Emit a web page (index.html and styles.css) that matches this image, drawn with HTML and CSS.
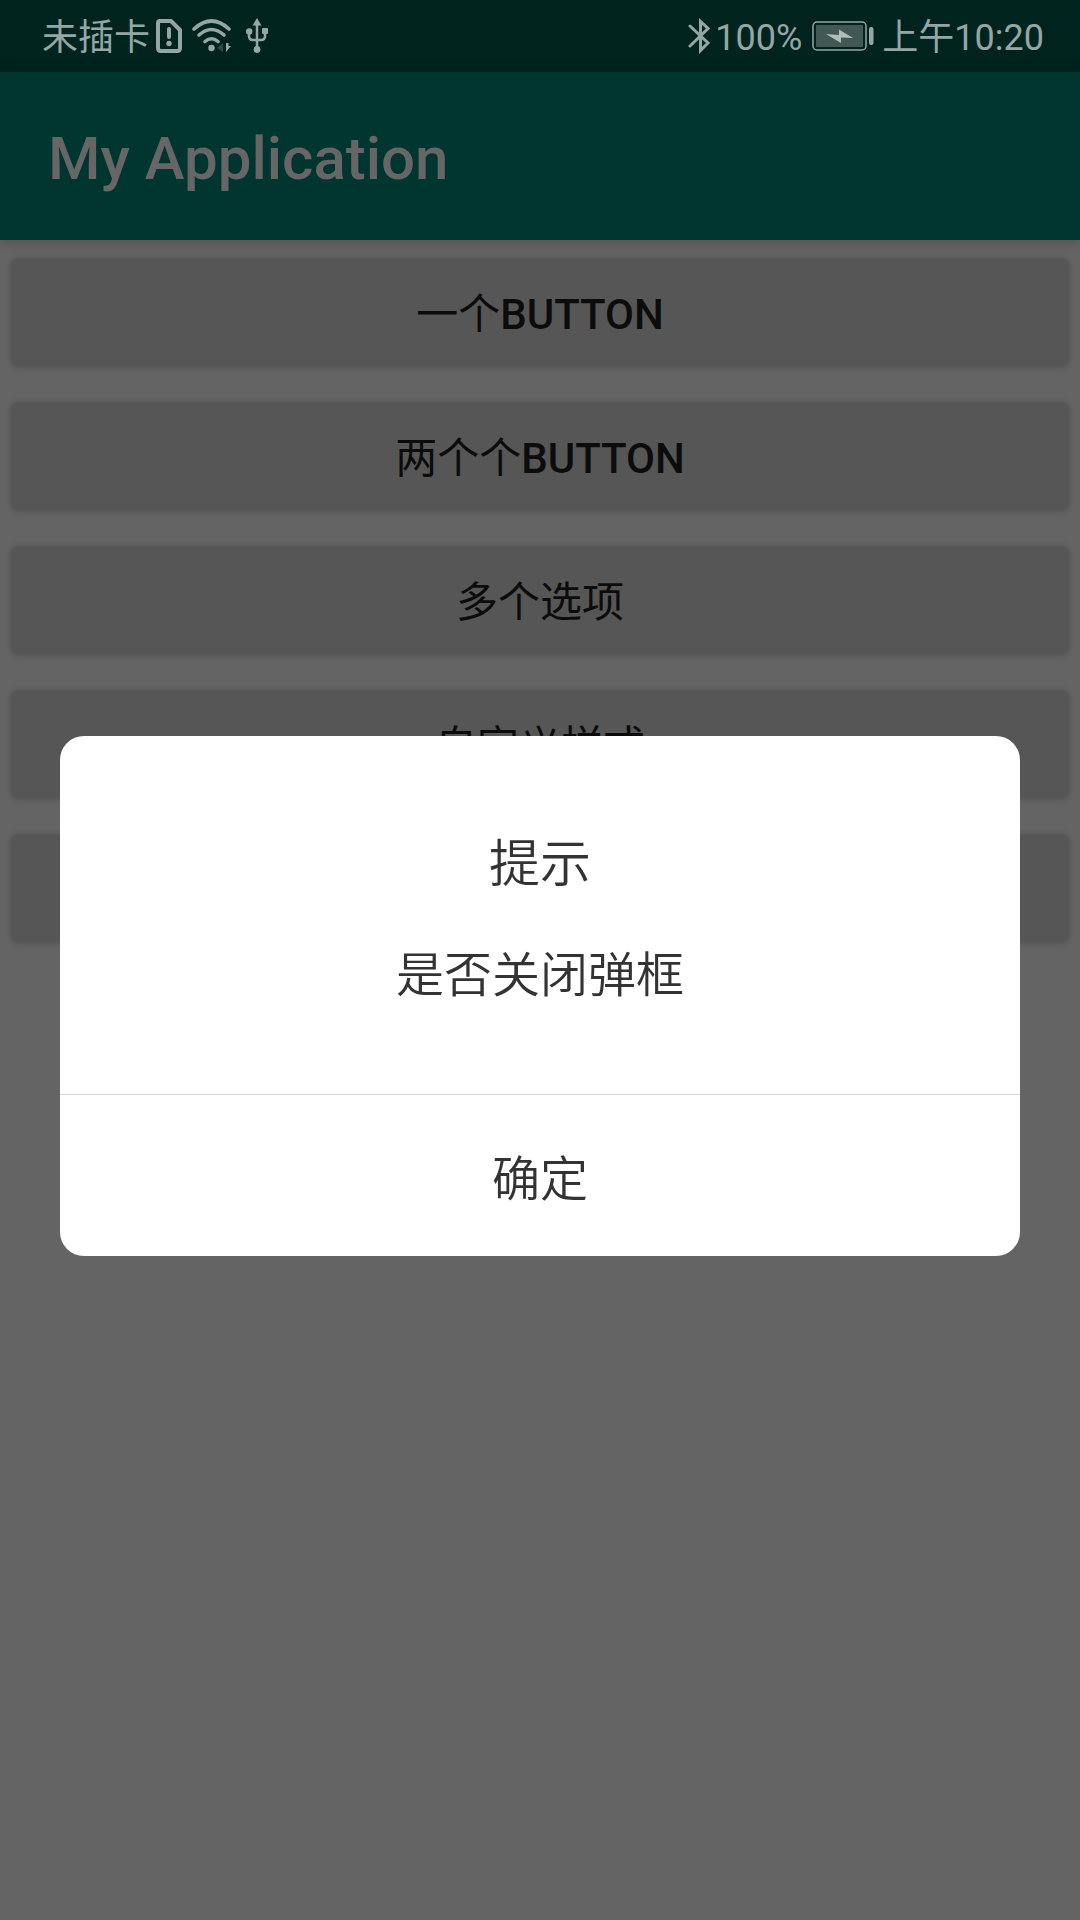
FILE: index.html
```html
<!DOCTYPE html>
<html lang="zh-CN">
<head>
<meta charset="utf-8">
<meta name="viewport" content="width=device-width, initial-scale=1">
<title>My Application</title>
<link rel="stylesheet" href="styles.css">
</head>
<body>
<div class="status-bar">
  <div class="status-group">
    <span class="status-text">未插卡</span>
    <svg class="icon-sim" width="26" height="34" viewBox="0 0 26 34" aria-hidden="true">
      <path d="M4 2H15L24 11V29Q24 32 21 32H5Q2 32 2 29V4Q2 2 4 2Z" fill="none" stroke="currentColor" stroke-width="4" stroke-linejoin="round"/>
      <path d="M13 10V18" stroke="currentColor" stroke-width="4" stroke-linecap="round"/>
      <circle cx="13" cy="24.500" r="2.700" fill="currentColor"/>
    </svg>
    <svg class="icon-wifi" width="40" height="34" viewBox="0 0 40 34" aria-hidden="true">
      <g fill="none" stroke="currentColor" stroke-width="3.600" stroke-linecap="round">
        <path d="M2 10Q19.500 -6 37 10"/>
        <path d="M7 16Q19.500 5 32 16"/>
        <path d="M13 22.500Q19.500 17 26 22.500"/>
      </g>
      <circle cx="19.500" cy="29" r="3.200" fill="currentColor"/>
      <path d="M31 24V33L25 29Z" fill="currentColor" opacity=".3"/>
      <path d="M34 24V33L39 27H36.500V24Z" fill="currentColor"/>
    </svg>
    <svg class="icon-usb" width="22" height="36" viewBox="0 0 22 36" aria-hidden="true">
      <path d="M11 6V32M3 13V18Q3 22 7 22H15Q19 22 19 18V13" fill="none" stroke="currentColor" stroke-width="2.500"/>
      <path d="M11 0L15.500 7.500H6.500Z" fill="currentColor"/>
      <circle cx="3.200" cy="13.500" r="3.200" fill="currentColor"/>
      <rect x="16" y="10" width="6" height="6" rx="1" fill="currentColor"/>
      <circle cx="11" cy="31.500" r="3.400" fill="currentColor"/>
    </svg>
  </div>
  <div class="status-group">
    <svg class="icon-bluetooth" width="22" height="36" viewBox="0 0 22 36" aria-hidden="true">
      <path d="M2 8L20 25L12.500 32.500V3.500L20 10.500L2 28" fill="none" stroke="currentColor" stroke-width="3" stroke-linecap="round"/>
    </svg>
    <span class="status-text">100%</span>
    <svg class="icon-battery" width="62" height="30" viewBox="0 0 62 30" aria-hidden="true">
      <rect x="1" y="1" width="53" height="28" rx="4" fill="none" stroke="currentColor" stroke-width="1.500"/>
      <rect x="4" y="4" width="47" height="22" rx="1" fill="#415855"/>
      <path d="M14 13L27 14V8.500L41 17L29 16.500V22Z" fill="#b0bdba"/>
      <rect x="57" y="6" width="4.500" height="18" rx="2" fill="currentColor"/>
    </svg>
    <span class="status-text">上午10:20</span>
  </div>
</div>
<header class="app-bar"><h1 class="app-title">My Application</h1></header>
<main class="button-list">
  <button class="list-button" type="button">一个<span class="latin">BUTTON</span></button>
  <button class="list-button" type="button">两个个<span class="latin">BUTTON</span></button>
  <button class="list-button" type="button">多个选项</button>
  <button class="list-button" type="button">自定义样式</button>
  <button class="list-button" type="button"></button>
</main>
<div class="dialog-layer">
  <section class="dialog" role="dialog" aria-modal="true" aria-labelledby="dialog-title">
    <div class="dialog-content">
      <h2 class="dialog-title" id="dialog-title">提示</h2>
      <p class="dialog-message">是否关闭弹框</p>
    </div>
    <button class="dialog-confirm" type="button">确定</button>
  </section>
</div>
</body>
</html>
```
FILE: styles.css
```css
* {
  box-sizing: border-box;
}

body {
  margin: 0;
  min-height: 100vh;
  background: #646464;
  font-family: Roboto, "Noto Sans CJK SC", sans-serif;
}

button {
  border: 0;
  font-family: inherit;
}

.status-bar {
  display: flex;
  align-items: center;
  justify-content: space-between;
  height: 72px;
  padding: 0 36px 0 42px;
  background: #00231e;
  color: #94a7a4;
  font-size: 36px;
  line-height: 48px;
}

.status-group {
  display: flex;
  align-items: center;
}

.status-text {
  padding-top: 4px;
}

.icon-sim {
  margin-left: 6px;
}

.icon-wifi {
  margin-left: 10px;
}

.icon-usb {
  margin-left: 14px;
}

.icon-bluetooth {
  margin-right: 5px;
}

.icon-battery {
  margin: 0 8px 0 10px;
}

.app-bar {
  position: relative;
  display: flex;
  align-items: center;
  height: 168px;
  padding: 6px 48px 0;
  background: #003530;
  box-shadow: 0 2px 12px rgba(0, 0, 0, 0.2);
}

.app-title {
  margin: 0;
  color: #666;
  font-size: 60px;
  font-weight: 500;
  line-height: 72px;
}

.button-list {
  display: grid;
  gap: 36px;
  padding: 18px 11px;
}

.list-button {
  height: 108px;
  padding: 0 0 4px;
  border-radius: 6px;
  background: #565656;
  box-shadow: 0 1px 6px rgba(0, 0, 0, 0.2);
  color: #0c0c0c;
  font-size: 42px;
  font-weight: 400;
}

.latin {
  font-weight: 500;
}

.dialog-layer {
  position: fixed;
  inset: 0;
  display: flex;
  align-items: center;
  justify-content: center;
  padding: 72px 60px 0;
}

.dialog {
  width: 100%;
  overflow: hidden;
  border-radius: 24px;
  background: #fff;
  color: #333;
  font-family: "Noto Sans CJK SC", sans-serif;
  font-weight: 350;
  text-align: center;
}

.dialog-content {
  display: grid;
  gap: 40px;
  padding: 88px 48px 88px;
}

.dialog-title {
  margin: 0;
  font-size: 51px;
  font-weight: inherit;
  line-height: 72px;
}

.dialog-message {
  margin: 0;
  font-size: 48px;
  line-height: 70px;
}

.dialog-confirm {
  display: block;
  width: 100%;
  height: 162px;
  padding: 0 0 2px;
  border-top: 1px solid #d8d8d8;
  background: transparent;
  color: inherit;
  font-size: 48px;
  font-weight: inherit;
}
```
